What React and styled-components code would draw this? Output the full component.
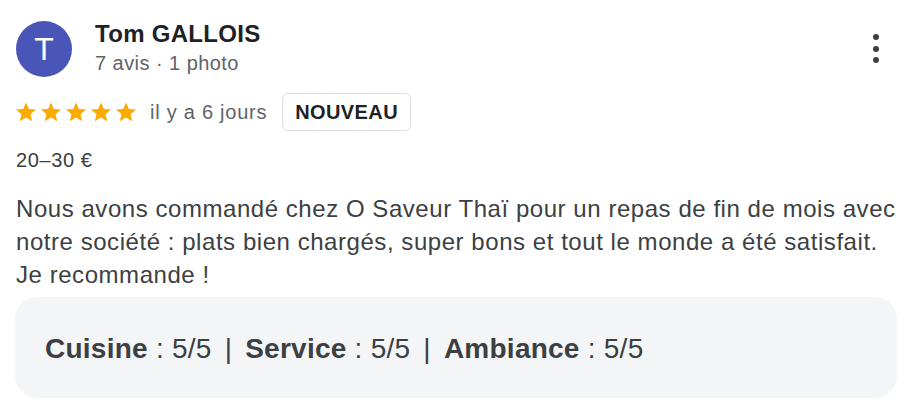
import React from 'react';
import styled, { createGlobalStyle } from 'styled-components';

const GlobalStyle = createGlobalStyle`
    body {
        margin: 0;
        background: #ffffff;
        font-family: 'Liberation Sans', Arial, sans-serif;
    }
`;

export const Review = styled.div`
    width: 911px;
    height: 413px;
    box-sizing: border-box;
    padding: 21px 14px 0 16px;
    color: #3c4043;
`;

export const HeaderRow = styled.div`
    display: flex;
    align-items: flex-start;
`;

export const Avatar = styled.div`
    width: 56px;
    height: 56px;
    border-radius: 50%;
    background-color: #4a56b7;
    color: #fff;
    display: flex;
    align-items: center;
    justify-content: center;
    font-size: 32px;
    font-weight: 300;
    flex-shrink: 0;
`;

export const NameBlock = styled.div`
    margin-left: 23px;
    margin-top: -2px;
    flex: 1;

    .Name {
        font-size: 24px;
        line-height: 30px;
        letter-spacing: 0.3px;
        font-weight: 700;
        color: #202124;
    }

    .Sub {
        margin-top: 2px;
        font-size: 20px;
        line-height: 24px;
        letter-spacing: 0.45px;
        color: #5f6368;
    }
`;

export const MoreButton = styled.div`
    display: flex;
    flex-direction: column;
    align-items: center;
    gap: 5.5px;
    margin-top: 13px;
    margin-right: 18px;

    span {
        width: 6px;
        height: 6px;
        border-radius: 50%;
        background-color: #3c4043;
    }
`;

export const RatingRow = styled.div`
    display: flex;
    align-items: center;
    margin-top: 16px;

    .Stars {
        display: flex;
        gap: 3px;
        margin-left: -1px;
        margin-right: 13px;
    }

    .When {
        font-size: 20px;
        letter-spacing: 0.75px;
        color: #5f6368;
        margin-right: 15px;
    }
`;

export const Badge = styled.div`
    height: 38px;
    box-sizing: border-box;
    padding: 0 12px;
    border: 1px solid #dadce0;
    border-radius: 6px;
    display: flex;
    align-items: center;
    font-size: 20px;
    letter-spacing: 0.4px;
    font-weight: 700;
    color: #202124;
`;

export const Price = styled.div`
    margin-top: 16px;
    font-size: 20px;
    line-height: 26px;
    letter-spacing: 0.6px;
    color: #3c4043;
`;

export const Body = styled.p`
    margin: 19px 0 0;
    font-size: 24px;
    line-height: 33px;
    letter-spacing: 0.55px;
    color: #3c4043;
`;

export const CriteriaBox = styled.div`
    margin: 6px 0 0 -1px;
    height: 101px;
    box-sizing: border-box;
    border-radius: 22px;
    background-color: #f4f5f7;
    display: flex;
    align-items: center;
    padding: 2px 0 0 30px;
    font-size: 28px;
    letter-spacing: 0.25px;
    color: #3c4043;

    b {
        font-weight: 700;
    }

    .Sep {
        margin: 0 13px;
    }
`;

const Star = () => (
    <svg width="22" height="22" viewBox="0 0 24 24">
        <path
            fill="#f9ab00"
            d="M12 1.5l3.1 7.2 7.8.67-5.92 5.13 1.78 7.64L12 18.1l-6.76 4.04 1.78-7.64L1.1 9.37l7.8-.67z"
        />
    </svg>
);

export default function App() {
    return (
        <>
            <GlobalStyle />
            <Review>
                <HeaderRow>
                    <Avatar>T</Avatar>
                    <NameBlock>
                        <div className="Name">Tom GALLOIS</div>
                        <div className="Sub">7 avis · 1 photo</div>
                    </NameBlock>
                    <MoreButton>
                        <span />
                        <span />
                        <span />
                    </MoreButton>
                </HeaderRow>
                <RatingRow>
                    <div className="Stars">
                        <Star />
                        <Star />
                        <Star />
                        <Star />
                        <Star />
                    </div>
                    <span className="When">il y a 6 jours</span>
                    <Badge>NOUVEAU</Badge>
                </RatingRow>
                <Price>20–30 €</Price>
                <Body>
                    Nous avons commandé chez O Saveur Thaï pour un repas de fin de mois avec
                    notre société : plats bien chargés, super bons et tout le monde a été
                    satisfait. Je recommande !
                </Body>
                <CriteriaBox>
                    <span><b>Cuisine</b> : 5/5</span>
                    <span className="Sep">|</span>
                    <span><b>Service</b> : 5/5</span>
                    <span className="Sep">|</span>
                    <span><b>Ambiance</b> : 5/5</span>
                </CriteriaBox>
            </Review>
        </>
    );
}
